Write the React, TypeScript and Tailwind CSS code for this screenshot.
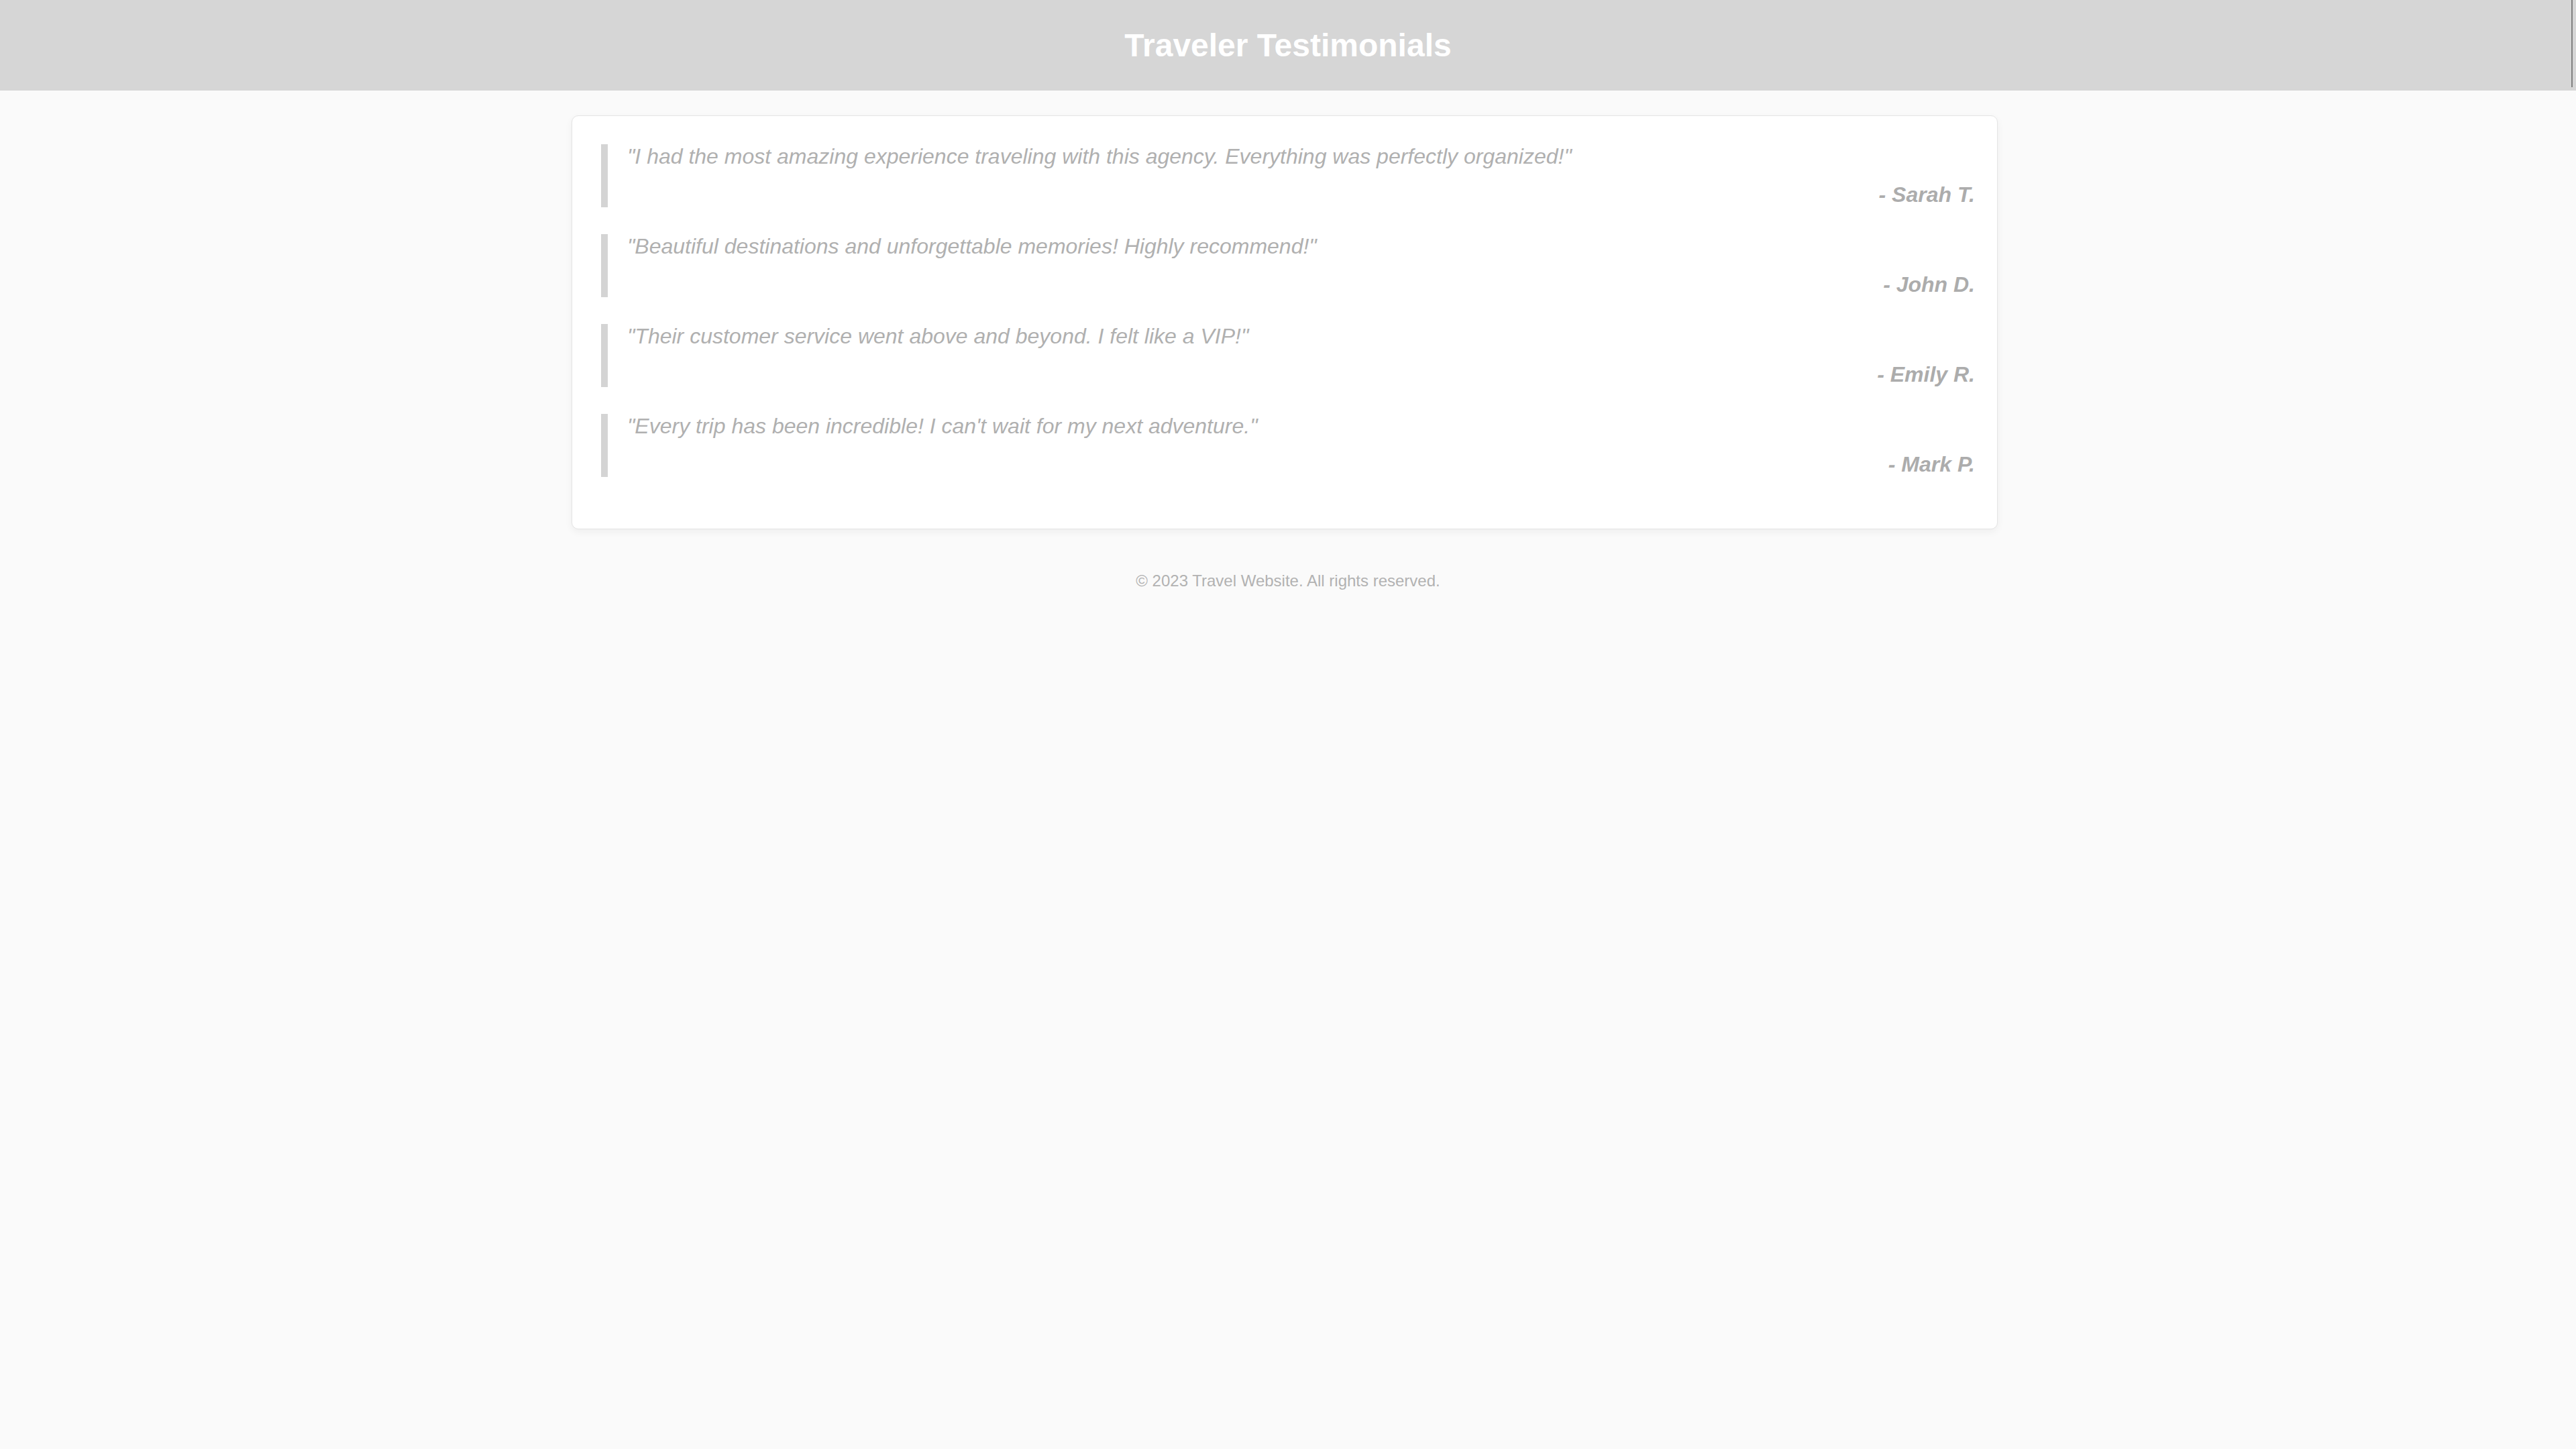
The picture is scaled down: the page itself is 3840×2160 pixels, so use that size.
import React from "react";

const items = [
  { q: '"I had the most amazing experience traveling with this agency. Everything was perfectly organized!"', a: "- Sarah T." },
  { q: '"Beautiful destinations and unforgettable memories! Highly recommend!"', a: "- John D." },
  { q: '"Their customer service went above and beyond. I felt like a VIP!"', a: "- Emily R." },
  { q: '"Every trip has been incredible! I can\'t wait for my next adventure."', a: "- Mark P." },
];

export default function App() {
  return (
    <div className="min-h-screen bg-[#fafafa] font-['Liberation_Sans',Arial,sans-serif]">
      <header className="relative flex h-[135px] items-center justify-center bg-[#d6d6d6]">
        <h1 className="text-[48px] font-bold leading-[55px] text-white">Traveler Testimonials</h1>
        <div className="absolute right-[5px] top-0 h-[130px] w-[2px] bg-[#808080]" />
      </header>
      <main className="flex justify-center pr-[10px] pt-[37px]">
        <div className="w-[2126px] rounded-[10px] border border-[#e4e4e4] bg-white pb-[37px] pl-[43px] pr-[33px] pt-[42px] shadow-[0_4px_12px_rgba(0,0,0,0.05)]">
          {items.map((t) => (
            <blockquote key={t.a} className="mb-[40px] border-l-[10px] border-[#d4d4d4] pl-[29px]">
              <p className="text-[32px] italic leading-[37px] text-[#b0b0b0]">{t.q}</p>
              <p className="mt-[20px] text-right text-[32px] font-bold italic leading-[37px] text-[#acacac]">{t.a}</p>
            </blockquote>
          ))}
        </div>
      </main>
      <footer className="mt-[63px] text-center text-[24px] leading-[28px] text-[#b2b2b2]">
        © 2023 Travel Website. All rights reserved.
      </footer>
    </div>
  );
}
